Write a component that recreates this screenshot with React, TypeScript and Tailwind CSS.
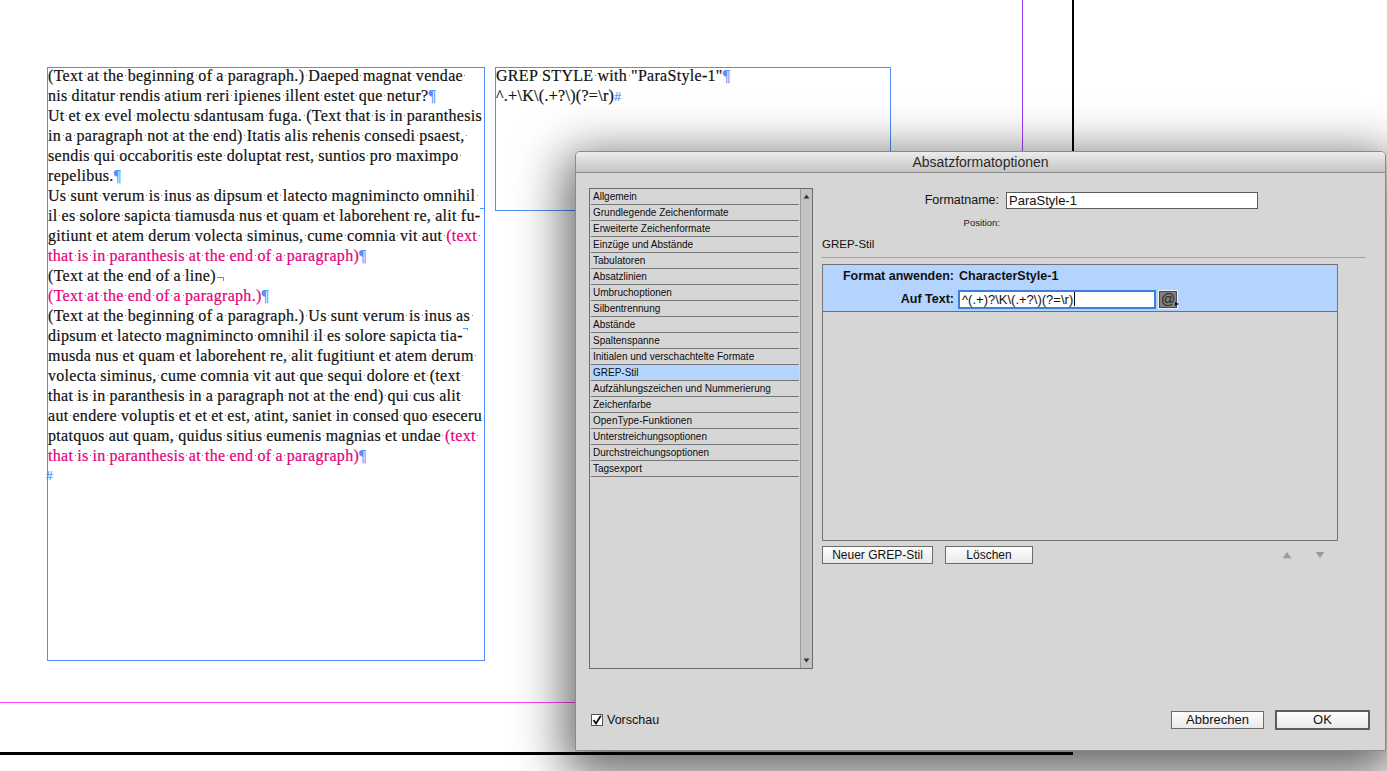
import { Fragment } from "react";

type Seg = { t: string; pink?: boolean };
type Line = { segs: Seg[]; end?: "para" | "br" | "hy" | "story" };

const storyLines: Line[] = [
  { segs: [{ t: "(Text at the beginning of a paragraph.) Daeped magnat vendae " }] },
  { segs: [{ t: "nis ditatur rendis atium reri ipienes illent estet que netur?" }], end: "para" },
  { segs: [{ t: "Ut et ex evel molectu sdantusam fuga. (Text that is in paranthesis " }] },
  { segs: [{ t: "in a paragraph not at the end) Itatis alis rehenis consedi psaest, " }] },
  { segs: [{ t: "sendis qui occaboritis este doluptat rest, suntios pro maximpo " }] },
  { segs: [{ t: "repelibus." }], end: "para" },
  { segs: [{ t: "Us sunt verum is inus as dipsum et latecto magnimincto omnihil " }] },
  { segs: [{ t: "il es solore sapicta tiamusda nus et quam et laborehent re, alit fu-" }], end: "hy" },
  { segs: [{ t: "gitiunt et atem derum volecta siminus, cume comnia vit aut " }, { t: "(text ", pink: true }] },
  { segs: [{ t: "that is in paranthesis at the end of a paragraph)", pink: true }], end: "para" },
  { segs: [{ t: "(Text at the end of a line)" }], end: "br" },
  { segs: [{ t: "(Text at the end of a paragraph.)", pink: true }], end: "para" },
  { segs: [{ t: "(Text at the beginning of a paragraph.) Us sunt verum is inus as " }] },
  { segs: [{ t: "dipsum et latecto magnimincto omnihil il es solore sapicta tia-" }], end: "hy" },
  { segs: [{ t: "musda nus et quam et laborehent re, alit fugitiunt et atem derum " }] },
  { segs: [{ t: "volecta siminus, cume comnia vit aut que sequi dolore et (text " }] },
  { segs: [{ t: "that is in paranthesis in a paragraph not at the end) qui cus alit " }] },
  { segs: [{ t: "aut endere voluptis et et et est, atint, saniet in consed quo eseceru" }] },
  { segs: [{ t: "ptatquos aut quam, quidus sitius eumenis magnias et undae " }, { t: "(text ", pink: true }] },
  { segs: [{ t: "that is in paranthesis at the end of a paragraph)", pink: true }], end: "para" },
];

const listItems = [
  "Allgemein",
  "Grundlegende Zeichenformate",
  "Erweiterte Zeichenformate",
  "Einzüge und Abstände",
  "Tabulatoren",
  "Absatzlinien",
  "Umbruchoptionen",
  "Silbentrennung",
  "Abstände",
  "Spaltenspanne",
  "Initialen und verschachtelte Formate",
  "GREP-Stil",
  "Aufzählungszeichen und Nummerierung",
  "Zeichenfarbe",
  "OpenType-Funktionen",
  "Unterstreichungsoptionen",
  "Durchstreichungsoptionen",
  "Tagsexport",
];

// visible space marker (InDesign hidden characters)
function Sp() {
  return (
    <span className="mb-[5px] inline-block h-px w-[4px]">
      <span className="mx-auto block h-px w-px bg-[#3f88ff]" />
    </span>
  );
}

function Words({ text }: { text: string }) {
  const parts = text.split(" ");
  return (
    <>
      {parts.map((w, i) => (
        <Fragment key={i}>
          {i > 0 && <Sp />}
          {w}
        </Fragment>
      ))}
    </>
  );
}

function Pilcrow() {
  return <span className="text-[#4f93ff]">¶</span>;
}

function StoryLine({ line }: { line: Line }) {
  return (
    <div className="h-[20px] whitespace-nowrap">
      {line.segs.map((s, i) => (
        <span key={i} className={s.pink ? "text-[#e4007c]" : undefined}>
          <Words text={s.t} />
        </span>
      ))}
      {line.end === "para" && <Pilcrow />}
      {line.end === "br" && (
        <span className="ml-[1px] inline-block h-[4px] w-[7px] border-r border-t border-[#4f93ff]" />
      )}
      {line.end === "hy" && (
        <span className="mb-[11px] inline-block h-[2px] w-[5px] border-t border-r border-[#4f93ff]" />
      )}
    </div>
  );
}

function TriUp({ className }: { className?: string }) {
  return (
    <svg width="8" height="6" viewBox="0 0 8 6" className={className}>
      <path d="M4 0.5 L7.5 5.5 L0.5 5.5 Z" fill="currentColor" />
    </svg>
  );
}

function TriDown({ className }: { className?: string }) {
  return (
    <svg width="8" height="6" viewBox="0 0 8 6" className={className}>
      <path d="M0.5 0.5 L7.5 0.5 L4 5.5 Z" fill="currentColor" />
    </svg>
  );
}

function StyleList() {
  return (
    <div className="flex h-[481px] w-[224px] shrink-0 border border-[#6a6a6a]">
      <ul className="flex-1">
        {listItems.map((item) => (
          <li
            key={item}
            className={
              item === "GREP-Stil"
                ? "mx-[1px] flex h-[16px] items-center border-b border-[#777] bg-[#b5d5ff] pl-[2px] text-[10px] text-[#0c0c0c]"
                : "mx-[1px] flex h-[16px] items-center border-b border-[#777] pl-[2px] text-[10px] text-[#0c0c0c]"
            }
          >
            {item}
          </li>
        ))}
      </ul>
      <div className="flex w-[12px] flex-col items-center justify-between border-l border-[#9a9a9a] bg-[#c3c3c3] py-[5px] text-[#333]">
        <TriUp className="h-[5px] w-[7px]" />
        <TriDown className="h-[5px] w-[7px]" />
      </div>
    </div>
  );
}

function MacButton({ label, className }: { label: string; className: string }) {
  return (
    <button
      className={`flex items-center justify-center bg-linear-to-b from-[#fdfdfd] to-[#e9e9e9] text-[#111] ${className}`}
    >
      {label}
    </button>
  );
}

function Dialog() {
  return (
    <div className="absolute left-[575px] top-[151px] flex h-[600px] w-[811px] flex-col rounded-t-[5px] border border-[#8a8a8a] bg-[#d6d6d6] font-['Liberation_Sans',Arial,sans-serif] text-[#111] shadow-[0_14px_50px_10px_rgba(0,0,0,0.6)]">
      {/* Title bar */}
      <div className="flex h-[21px] items-center justify-center rounded-t-[4px] border-b border-[#8c8c8c] bg-linear-to-b from-[#ededed] to-[#c4c4c4] text-[14px] text-[#2a2a2a]">
        Absatzformatoptionen
      </div>

      {/* Body */}
      <div className="flex flex-1 gap-[9px] pl-[13px] pr-[19px] pt-[15px]">
        <StyleList />

        <div className="flex w-[544px] flex-col">
          <div className="mt-[3px] flex items-center">
            <span className="w-[178px] pr-[1px] text-right text-[12.5px]">Formatname:</span>
            <div className="ml-[6px] flex h-[17px] w-[252px] items-center border border-[#5c5c5c] bg-white pl-[2px] text-[13px] leading-none">
              ParaStyle-1
            </div>
          </div>
          <div className="mt-[7px] w-[178px] text-right text-[9.5px] leading-[12px] text-[#222]">Position:</div>
          <div className="mt-[8px] text-[11.5px] leading-[14px]">GREP-Stil</div>
          <div className="mt-[6px] h-px bg-[#a2a2a2]" />

          {/* GREP style box */}
          <div className="mt-[6px] h-[277px] w-[516px] border border-[#737373]">
            <div className="h-[47px] border-b border-[#6f6f6f] bg-[#b4d4ff] pt-[5px]">
              <div className="flex h-[14px] items-center text-[12.5px] font-bold">
                <span className="w-[131px] text-right">Format anwenden:</span>
                <span className="ml-[5px]">CharacterStyle-1</span>
              </div>
              <div className="mt-[6px] flex items-center">
                <span className="w-[131px] text-right text-[12.5px] font-bold">Auf Text:</span>
                <div className="ml-[4px] flex h-[19px] w-[198px] items-center border-2 border-[#3b7fdb] bg-white pl-[2px] text-[13px] leading-none">
                  {"^(.+)?\\K\\(.+?\\)(?=\\r)"}
                  <span className="ml-[1px] h-[14px] w-px bg-black" />
                </div>
                <div className="ml-[2px] flex h-[19px] w-[20px] border border-[#edf3fc]">
                  <div className="relative flex flex-1 items-center justify-center border border-[#4a4a4a] bg-[#7f7f7f] text-[14px] leading-none text-[#262626]">
                    @
                    <svg width="4" height="4" viewBox="0 0 4 4" className="absolute bottom-[1px] right-[-3px]">
                      <path d="M0 0 L4 2 L0 4 Z" fill="#111" />
                    </svg>
                  </div>
                </div>
              </div>
            </div>
          </div>

          <div className="mt-[5px] flex w-[516px] items-center">
            <MacButton label="Neuer GREP-Stil" className="h-[18px] w-[111px] border border-[#6b6b6b] text-[12px]" />
            <MacButton label="Löschen" className="ml-[12px] h-[18px] w-[88px] border border-[#6b6b6b] text-[12px]" />
            <div className="ml-auto mr-[13px] flex items-center gap-[23px] text-[#9c9c9c]">
              <TriUp className="h-[8px] w-[10px]" />
              <TriDown className="h-[8px] w-[10px]" />
            </div>
          </div>
        </div>
      </div>

      {/* Footer */}
      <div className="flex items-center justify-between pb-[20px] pl-[15px] pr-[15px]">
        <label className="flex items-center gap-[4px] text-[12.5px]">
          <span className="flex h-[12px] w-[12px] items-center justify-center border border-[#555] bg-white">
            <svg width="10" height="10" viewBox="0 0 10 10">
              <path d="M1.5 5 L4 8.5 L8.8 0.8" fill="none" stroke="#111" strokeWidth="1.8" />
            </svg>
          </span>
          Vorschau
        </label>
        <div className="flex items-center gap-[11px]">
          <MacButton label="Abbrechen" className="h-[18px] w-[93px] border border-[#6b6b6b] text-[13px]" />
          <MacButton label="OK" className="h-[20px] w-[95px] border-2 border-[#5e5e5e] text-[13px]" />
        </div>
      </div>
    </div>
  );
}

export default function App() {
  return (
    <div className="relative h-[771px] w-[1387px] overflow-hidden bg-white">
      {/* page guides */}
      <div className="absolute left-[1022px] top-0 h-[160px] w-px bg-[#9b3cff]" />
      <div className="absolute left-[1072px] top-0 h-[160px] w-[2px] bg-black" />
      <div className="absolute left-0 top-[702px] h-px w-[600px] bg-[#ff45ff]" />
      <div className="absolute left-0 top-[752px] h-[3px] w-[1073px] bg-black" />

      {/* Text frame 1 */}
      <div className="absolute left-[47px] top-[67px] h-[594px] w-[438px] border border-[#4f8ff7] font-['Liberation_Serif',serif] text-[16px] leading-[20px] tracking-[0.3px] text-[#111] [-webkit-text-stroke:0.2px_currentColor]">
        <div className="-mt-[2px]">
          {storyLines.map((l, i) => (
            <StoryLine key={i} line={l} />
          ))}
          <div className="-ml-[2px] h-[20px] font-['Liberation_Sans',sans-serif] text-[12px] text-[#4f93ff]">#</div>
        </div>
      </div>

      {/* Text frame 2 */}
      <div className="absolute left-[495px] top-[67px] h-[144px] w-[396px] border border-[#4f8ff7] font-['Liberation_Serif',serif] text-[16px] leading-[20px] tracking-[0.3px] text-[#111] [-webkit-text-stroke:0.2px_currentColor]">
        <div className="-mt-[2px]">
          <div className="h-[20px] whitespace-nowrap">
            <Words text={'GREP STYLE with "ParaStyle-1"'} />
            <Pilcrow />
          </div>
          <div className="h-[20px] whitespace-nowrap">
            {"^.+\\K\\(.+?\\)(?=\\r)"}
            <span className="font-['Liberation_Sans',sans-serif] text-[12px] text-[#4f93ff]">#</span>
          </div>
        </div>
      </div>

      <Dialog />
    </div>
  );
}
